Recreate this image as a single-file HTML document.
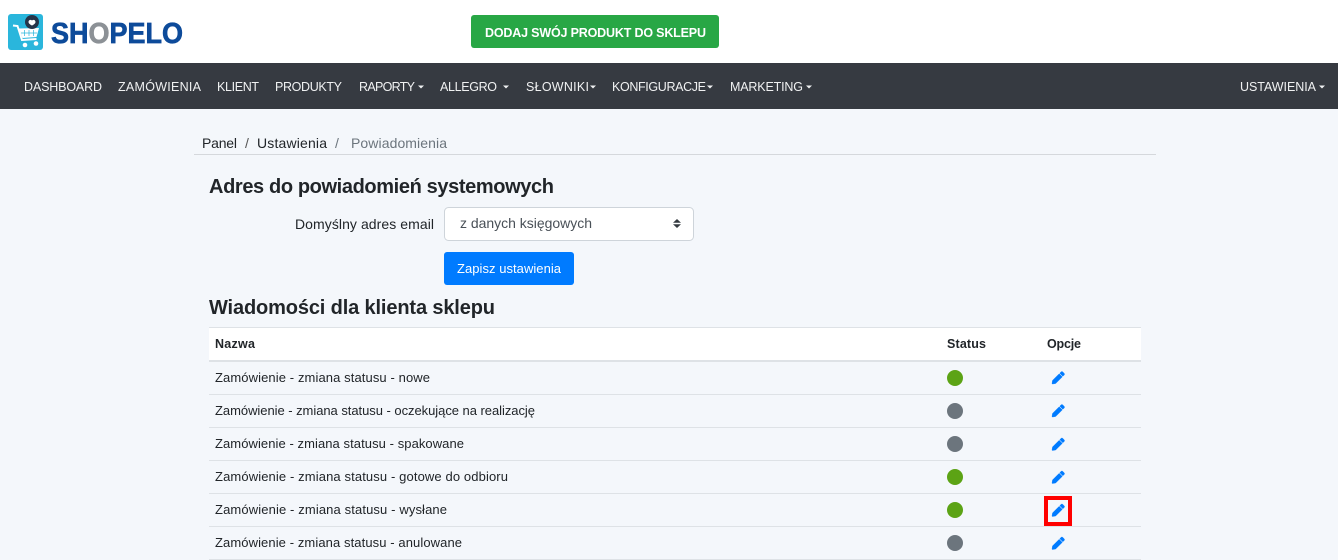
<!DOCTYPE html>
<html><head><meta charset="utf-8"><title>Powiadomienia</title>
<style>
html,body{margin:0;padding:0;width:1338px;height:560px;overflow:hidden;background:#f4f7fb}
svg{display:block}
text{font-family:"Liberation Sans",sans-serif;font-size:13px;fill:#212529}
.n text{fill:#f0f1f2;font-size:12.5px}
.c{font-size:14px}
.h{font-size:20px;font-weight:bold;fill:#212529}
.b{font-weight:bold;font-size:12.5px}
</style></head><body>
<svg width="1338" height="560" viewBox="0 0 1338 560" xmlns="http://www.w3.org/2000/svg">
<defs>
<path id="p" d="M497.900 142.100l-46.100 46.100c-4.700 4.700-12.300 4.700-17 0l-111-111c-4.700-4.700-4.700-12.300 0-17l46.100-46.100c18.700-18.700 49.100-18.700 67.900 0l60.100 60.100c18.800 18.700 18.800 49.100 0 67.900zM284.200 99.800L21.600 362.400.4 483.900c-2.900 16.400 11.400 30.600 27.800 27.800l121.500-21.300 262.600-262.600c4.700-4.700 4.700-12.300 0-17l-111-111c-4.800-4.700-12.400-4.700-17.100 0z" stroke="#007bff" stroke-width="14"/>
<filter id="soft" x="-5%" y="-5%" width="110%" height="110%"><feGaussianBlur stdDeviation="0.35"/></filter>
</defs>
<rect width="1338" height="560" fill="#f4f7fb"/>
<rect width="1338" height="63" fill="#fff"/>

<!-- logo -->
<g filter="url(#soft)">
<rect x="8" y="14" width="35" height="36" rx="3" fill="#29b6dc"/>
<path d="M13 25.500l4.500 .5 4.500 14 14.500-1" fill="none" stroke="#fff" stroke-width="2"/>
<path d="M19 28.500l20-.5-2.500 9-14 1z" fill="#fff"/>
<path d="M24.500 30v6M29 30v6M33.500 30v6M21 33h16" stroke="#29b6dc" stroke-width=".7"/>
<circle cx="25" cy="45" r="2.300" fill="#fff"/><circle cx="36" cy="43.500" r="2.300" fill="#fff"/>
<circle cx="32" cy="22" r="7" fill="#26344a"/>
<path d="M28.500 22c0-2 2-2.800 3.500-1.500 1.500-1.300 3.500-.5 3.500 1.500 0 1.500-2 2.800-3.500 3.500-1.500-.7-3.500-2-3.500-3.500z" fill="#fff"/>
<text x="51" y="43" textLength="132" lengthAdjust="spacingAndGlyphs" style="font-size:29px;font-weight:bold;fill:#0d4b9a;stroke:#0d4b9a;stroke-width:.7"><tspan>SH</tspan><tspan style="fill:#8c9196;stroke:#8c9196">O</tspan><tspan>PELO</tspan></text>
</g>

<!-- green button -->
<rect x="471" y="15" width="248" height="33" rx="3" fill="#28a745"/>
<text x="485" y="37" textLength="221" style="font-size:12.500px;font-weight:bold;fill:#fff">DODAJ SWÓJ PRODUKT DO SKLEPU</text>

<!-- nav -->
<rect y="63" width="1338" height="46" fill="#363a41"/>
<g class="n">
<text x="24" y="91" textLength="78">DASHBOARD</text>
<text x="118" y="91" textLength="83">ZAMÓWIENIA</text>
<text x="217" y="91" textLength="42">KLIENT</text>
<text x="275" y="91" textLength="67">PRODUKTY</text>
<text x="359" y="91" textLength="56">RAPORTY</text>
<text x="440" y="91" textLength="57">ALLEGRO</text>
<text x="526" y="91" textLength="63">SŁOWNIKI</text>
<text x="612" y="91" textLength="94">KONFIGURACJE</text>
<text x="730" y="91" textLength="73">MARKETING</text>
<text x="1240" y="91" textLength="76">USTAWIENIA</text>
</g>
<g fill="#f0f1f2">
<path d="M418 85.500h6l-3 3z"/><path d="M503 85.500h6l-3 3z"/><path d="M590 85.500h6l-3 3z"/><path d="M707 85.500h6l-3 3z"/><path d="M806 85.500h6l-3 3z"/><path d="M1319 85.500h6l-3 3z"/>
</g>

<!-- breadcrumb -->
<text x="202" y="148" textLength="35" class="c">Panel</text>
<text x="245" y="148" class="c" style="fill:#555">/</text>
<text x="257" y="148" textLength="70" class="c">Ustawienia</text>
<text x="335" y="148" class="c" style="fill:#6c757d">/</text>
<text x="351" y="148" textLength="96" class="c" style="fill:#6c757d">Powiadomienia</text>
<rect x="194" y="154" width="962" height="1" fill="#d5d8dc"/>

<text x="209" y="193" textLength="345" class="h">Adres do powiadomień systemowych</text>
<text x="295" y="229" textLength="139" class="c">Domyślny adres email</text>
<rect x="444.500" y="207.500" width="249" height="33" rx="4" fill="#fff" stroke="#ced4da"/>
<text x="460" y="228" textLength="132" class="c" style="fill:#495057">z danych księgowych</text>
<path d="M677 219l4 3.800h-8zM677 228l-4-3.800h8z" fill="#343a40"/>
<rect x="444" y="252" width="130" height="33" rx="3" fill="#007bff"/>
<text x="457" y="273" textLength="104" style="fill:#fff;font-size:13px">Zapisz ustawienia</text>
<text x="209" y="314" textLength="286" class="h">Wiadomości dla klienta sklepu</text>

<!-- table -->
<rect x="209" y="327" width="932" height="34" fill="#fff"/>
<rect x="209" y="327" width="932" height="1" fill="#dee2e6"/>
<rect x="209" y="360" width="932" height="2" fill="#dee2e6"/>
<text x="215" y="348" textLength="40" class="b">Nazwa</text>
<text x="947" y="348" textLength="39" class="b">Status</text>
<text x="1047" y="348" textLength="34" class="b">Opcje</text>
<g fill="#dee2e6">
<rect x="209" y="394" width="932" height="1"/><rect x="209" y="427" width="932" height="1"/><rect x="209" y="460" width="932" height="1"/><rect x="209" y="493" width="932" height="1"/><rect x="209" y="526" width="932" height="1"/><rect x="209" y="559" width="932" height="1"/>
</g>
<text x="215" y="382" textLength="215">Zamówienie - zmiana statusu - nowe</text>
<text x="215" y="415" textLength="320">Zamówienie - zmiana statusu - oczekujące na realizację</text>
<text x="215" y="448" textLength="249">Zamówienie - zmiana statusu - spakowane</text>
<text x="215" y="481" textLength="293">Zamówienie - zmiana statusu - gotowe do odbioru</text>
<text x="215" y="514" textLength="232">Zamówienie - zmiana statusu - wysłane</text>
<text x="215" y="547" textLength="247">Zamówienie - zmiana statusu - anulowane</text>

<circle cx="955" cy="378" r="8" fill="#5ca315"/>
<circle cx="955" cy="411" r="8" fill="#6c757d"/>
<circle cx="955" cy="444" r="8" fill="#6c757d"/>
<circle cx="955" cy="477" r="8" fill="#5ca315"/>
<circle cx="955" cy="510" r="8" fill="#5ca315"/>
<circle cx="955" cy="543" r="8" fill="#6c757d"/>

<g fill="#007bff">
<use href="#p" transform="translate(1052 371.500) scale(.0245)"/>
<use href="#p" transform="translate(1052 404.500) scale(.0245)"/>
<use href="#p" transform="translate(1052 438) scale(.0245)"/>
<use href="#p" transform="translate(1052 471) scale(.0245)"/>
<use href="#p" transform="translate(1052 504) scale(.0245)"/>
<use href="#p" transform="translate(1052 537) scale(.0245)"/>
</g>
<rect x="1046" y="498" width="24" height="26" fill="none" stroke="#f00" stroke-width="4"/>
</svg>
</body></html>
